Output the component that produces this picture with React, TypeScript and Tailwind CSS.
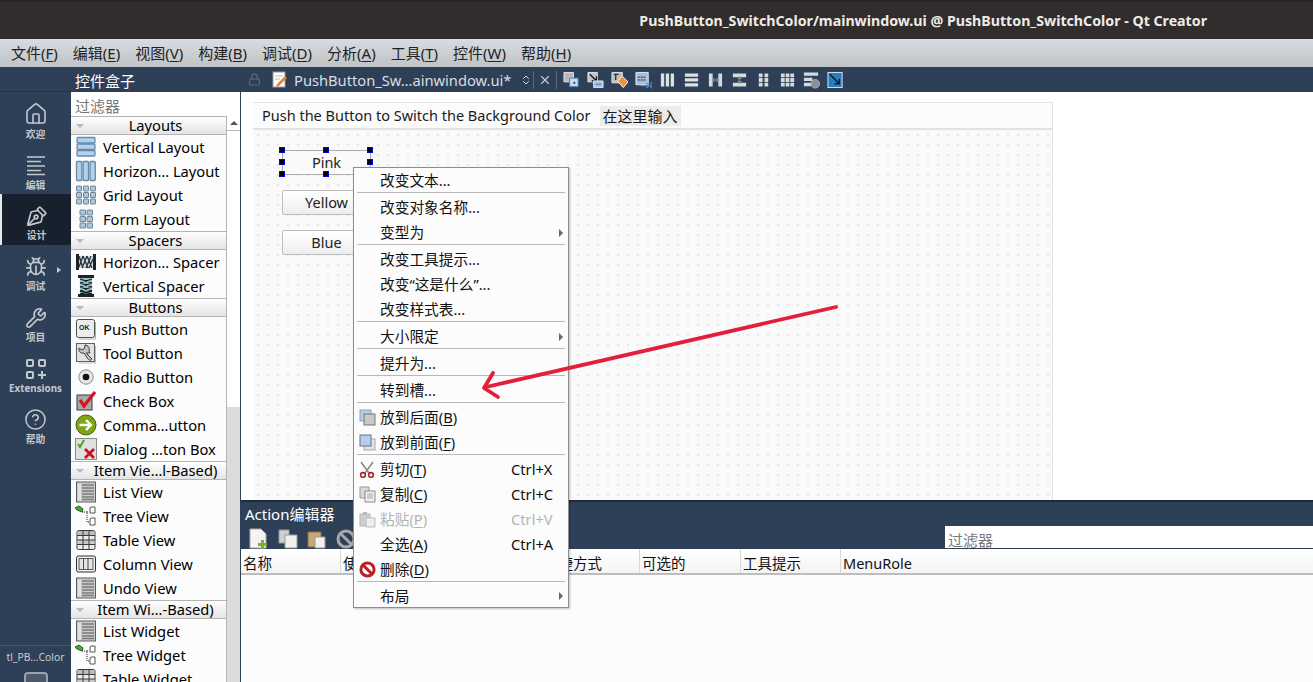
import type { ReactNode } from "react";
import { Home, PenTool, Bug, Wrench, HelpCircle, Lock, X, ChevronsUpDown } from "lucide-react";

const UI_FONT = "font-['Noto_Sans','Noto_Sans_CJK_SC',sans-serif]";

function Gl({ children }: { children: ReactNode }) {
  return (
    <svg width="22" height="22" viewBox="0 0 22 22" className="shrink-0">
      {children}
    </svg>
  );
}

const ListGlyph = () => (
  <Gl>
    <rect x="1.5" y="1" width="19" height="20" fill="#c9c9c9" stroke="#5e5e5e" />
    <rect x="3" y="2.5" width="3" height="17" fill="#e2e2e2" />
    <path d="M7 4h12M7 7h12M7 10h12M7 13h12M7 16h12M7 18.5h12" stroke="#7c7c7c" strokeWidth="1.4" />
  </Gl>
);

const ICONS: Record<string, ReactNode> = {
  vertical: (
    <Gl>
      {[1.5, 8, 14.5].map((y) => (
        <rect key={y} x="2" y={y} width="18" height="5.5" rx="1" fill="#a9d4f5" stroke="#73879b" strokeWidth="1.3" />
      ))}
    </Gl>
  ),
  horizontal: (
    <Gl>
      {[1.5, 8.2, 15].map((x) => (
        <rect key={x} x={x} y="1.5" width="5.3" height="19" rx="1" fill="#a9d4f5" stroke="#73879b" strokeWidth="1.3" />
      ))}
    </Gl>
  ),
  grid: (
    <Gl>
      {[1.5, 8.5, 15.5].flatMap((x) =>
        [2, 8.5, 15].map((y) => <rect key={x + "-" + y} x={x} y={y} width="5" height="5" rx="0.5" fill="#a9c6e2" stroke="#75838f" />),
      )}
    </Gl>
  ),
  form: (
    <Gl>
      {[5, 12].flatMap((x) =>
        [2, 8.5, 15].map((y) => <rect key={x + "-" + y} x={x} y={y} width="5.5" height="5" rx="0.5" fill="#a9c6e2" stroke="#75838f" />),
      )}
    </Gl>
  ),
  hspacer: (
    <Gl>
      <rect x="1" y="3" width="3" height="16" fill="#222" />
      <rect x="18" y="3" width="3" height="16" fill="#222" />
      <rect x="4" y="5" width="14" height="12" fill="#d3dce0" />
      <path d="M4 16l4-11M7 17l5-12M11 17l5-12M14 17l4-9M4 5l4 12M8 5l5 12M12 5l5 12" stroke="#26343d" strokeWidth="1.3" fill="none" />
    </Gl>
  ),
  vspacer: (
    <Gl>
      <rect x="3" y="0" width="16" height="3" fill="#222" />
      <rect x="3" y="19" width="16" height="3" fill="#222" />
      <rect x="5" y="3" width="12" height="16" fill="#9fbcc6" />
      <path d="M5 4l12 4M5 8l12 4M5 12l12 4M5 16l12 3M17 4L5 8M17 8L5 12M17 12L5 16M17 16L5 19" stroke="#0f1f28" strokeWidth="1.3" fill="none" />
    </Gl>
  ),
  push: (
    <Gl>
      <rect x="1.5" y="1.5" width="18" height="18" rx="2" fill="#ececec" stroke="#4f4f4f" />
      <path d="M20.5 4v17H4" stroke="#b0b0b0" fill="none" />
      <text x="4" y="12" fontSize="7" fontWeight="700" fill="#222" fontFamily="Liberation Sans, sans-serif">OK</text>
    </Gl>
  ),
  tool: (
    <Gl>
      <rect x="1.5" y="1.5" width="18" height="18" fill="#e2e2e2" stroke="#5e5e5e" />
      <path d="M20.5 4v17H4" stroke="#bdbdbd" fill="none" />
      <path d="M17 17c-1 2-3 1-4 0L9 11C6 12 3 9 4 6l3 2 2-1 1-3 0-1c3 0 5 3 4 6l1 2-4 0 5 5z" fill="#c4c4c4" stroke="#3e3e3e" />
    </Gl>
  ),
  radio: (
    <Gl>
      <circle cx="11" cy="11" r="7.2" fill="#e6e6e6" stroke="#8c8c8c" />
      <circle cx="11" cy="11" r="3.3" fill="#111" />
    </Gl>
  ),
  check: (
    <Gl>
      <rect x="2" y="5" width="15" height="15" fill="#a9a9a9" stroke="#3a3a3a" />
      <path d="M5 10l4 6L20 2" stroke="#d8121f" strokeWidth="3.2" fill="none" />
    </Gl>
  ),
  command: (
    <Gl>
      <circle cx="11" cy="11" r="10" fill="#7da515" stroke="#46600c" />
      <path d="M4.5 11h11M11 6l5 5-5 5" stroke="#fff" strokeWidth="2.4" fill="none" />
    </Gl>
  ),
  dialog: (
    <Gl>
      <rect x="0.5" y="0.5" width="21" height="21" fill="#e0e0e0" stroke="#8a8a8a" />
      <path d="M3 6l2 3 4-7" stroke="#4aa52a" strokeWidth="2" fill="none" />
      <path d="M10 11l9 9M19 11l-9 9" stroke="#c8101a" strokeWidth="2.8" />
    </Gl>
  ),
  list: <ListGlyph />,
  tree: (
    <Gl>
      <path d="M0 3l4-2 4 3-1 3-5-2z" fill="#4ca82e" stroke="#22601a" />
      <path d="M7 7h5v10h2M12 7h2" stroke="#222" strokeDasharray="1 1" fill="none" />
      <path d="M16 2h4v6h-5V3zM16 13h4v7h-5v-6z" fill="#fff" stroke="#555" />
    </Gl>
  ),
  table: (
    <Gl>
      <rect x="2" y="1.5" width="18" height="19" rx="1.5" fill="#ececec" stroke="#3a3a3a" />
      <rect x="2.5" y="2" width="17" height="4" fill="#bdbdbd" />
      <rect x="2.5" y="11" width="17" height="4.5" fill="#c9c9c9" />
      <path d="M2 6.5h18M2 11h18M2 15.5h18M8 1.5v19M14 1.5v19" stroke="#3a3a3a" />
    </Gl>
  ),
  column: (
    <Gl>
      <rect x="1.5" y="3" width="19" height="16" rx="2" fill="#f2f2f2" stroke="#2e2e2e" />
      <rect x="4" y="5.5" width="14" height="11" fill="#e4e4e4" stroke="#5a5a5a" />
      <path d="M8.5 5.5v11M13 5.5v11" stroke="#4a4a4a" />
    </Gl>
  ),
};

type ToolItem = { label: string; icon: string };
type Section = { title: string; items: ToolItem[] };

const SECTIONS: Section[] = [
  {
    title: "Layouts",
    items: [
      { label: "Vertical Layout", icon: "vertical" },
      { label: "Horizon… Layout", icon: "horizontal" },
      { label: "Grid Layout", icon: "grid" },
      { label: "Form Layout", icon: "form" },
    ],
  },
  {
    title: "Spacers",
    items: [
      { label: "Horizon… Spacer", icon: "hspacer" },
      { label: "Vertical Spacer", icon: "vspacer" },
    ],
  },
  {
    title: "Buttons",
    items: [
      { label: "Push Button", icon: "push" },
      { label: "Tool Button", icon: "tool" },
      { label: "Radio Button", icon: "radio" },
      { label: "Check Box", icon: "check" },
      { label: "Comma…utton", icon: "command" },
      { label: "Dialog …ton Box", icon: "dialog" },
    ],
  },
  {
    title: "Item Vie…l-Based)",
    items: [
      { label: "List View", icon: "list" },
      { label: "Tree View", icon: "tree" },
      { label: "Table View", icon: "table" },
      { label: "Column View", icon: "column" },
      { label: "Undo View", icon: "list" },
    ],
  },
  {
    title: "Item Wi…-Based)",
    items: [
      { label: "List Widget", icon: "list" },
      { label: "Tree Widget", icon: "tree" },
      { label: "Table Widget", icon: "table" },
    ],
  },
];

const MENUS = ["文件(F)", "编辑(E)", "视图(V)", "构建(B)", "调试(D)", "分析(A)", "工具(T)", "控件(W)", "帮助(H)"];

// "文件(F)" -> the letter in the brackets gets its mnemonic underline
function Mnemonic({ text }: { text: string }) {
  const m = text.match(/^(.*\()(.)(\))$/);
  if (!m) return <>{text}</>;
  return (
    <>
      {m[1]}
      <span className="underline underline-offset-2">{m[2]}</span>
      {m[3]}
    </>
  );
}

function Extensions() {
  return (
    <svg width="22" height="22" viewBox="0 0 22 22" fill="none" stroke="#c2c8ce" strokeWidth="2">
      <rect x="2" y="2" width="6" height="6" rx="1" />
      <rect x="14" y="2" width="6" height="6" rx="1" />
      <rect x="2" y="14" width="6" height="6" rx="1" />
      <path d="M17 13v8M13 17h8" />
    </svg>
  );
}

function EditLines() {
  return (
    <svg width="22" height="24" viewBox="0 0 22 24" fill="none" stroke="#c2c8ce" strokeWidth="1.6">
      <path d="M2 4h18M2 8.5h14M2 13h18M2 17.500h14M2 21.500h18" />
    </svg>
  );
}

const MODES = [
  { label: "欢迎", icon: <Home size={24} strokeWidth={1.6} /> },
  { label: "编辑", icon: <EditLines /> },
  { label: "设计", icon: <PenTool size={22} strokeWidth={1.8} className="-scale-y-100" />, active: true },
  { label: "调试", icon: <Bug size={22} strokeWidth={1.8} />, arrow: true },
  { label: "项目", icon: <Wrench size={22} strokeWidth={1.8} /> },
  { label: "Extensions", icon: <Extensions /> },
  { label: "帮助", icon: <HelpCircle size={23} strokeWidth={1.6} /> },
];

function ModeBar() {
  return (
    <aside className="flex w-[71px] shrink-0 flex-col bg-[#2e4057]">
      <div className="h-[25px] shrink-0 border-b border-[#25344a]" />
      {MODES.map((m) => (
        <div
          key={m.label}
          className={`relative flex h-[51px] shrink-0 flex-col items-center justify-center gap-[3px] pt-[7px] text-[#c2c8ce] ${
            m.active ? "border-l-2 border-[#e8e8e8] bg-[#17202d]" : ""
          }`}
        >
          {m.icon}
          <span className="text-[9.8px] leading-3 font-bold">{m.label}</span>
          {m.arrow && <span className="absolute top-[22px] right-[10px] border-y-[3px] border-l-4 border-y-transparent border-l-[#c2c8ce]" />}
        </div>
      ))}
      <div className="mt-auto flex flex-col items-center">
        <div className="w-full border-t border-[#47576b] pt-[4px] text-center text-[10.3px] leading-[14px] text-[#c9ced4]">tl_PB…Color</div>
        <div className="mt-[8px] h-[10px] w-6 rounded-t-sm border-2 border-b-0 border-[#9aa3ad] bg-[#4b5a6b]" />
      </div>
    </aside>
  );
}

function Toolbox() {
  return (
    <section className="flex w-[170px] shrink-0 flex-col overflow-hidden border-r border-[#2e4057]">
      <div className="flex h-[25px] shrink-0 items-center bg-[#2e4057] px-1 pt-[4px] text-[15px] text-white">控件盒子</div>
      <div className="flex h-[24px] shrink-0 items-center bg-white px-1 pt-[4px] text-[15px] text-[#777]">过滤器</div>
      <div className="flex min-h-0 flex-1">
        <div className="w-[155px] shrink-0 bg-[#fcfcfc]">
          {SECTIONS.map((s) => (
            <div key={s.title}>
              <div className="relative flex h-[19px] items-center justify-center whitespace-nowrap border-y border-[#b4b4b4] bg-gradient-to-b from-white to-[#e4e4e4] pl-[14px] text-[14.7px] leading-none text-black">
                <span className="absolute top-[7px] left-[5px] border-x-[4px] border-t-[4px] border-x-transparent border-t-[#b9b9b9]" />
                {s.title}
              </div>
              {s.items.map((i) => (
                <div key={i.label} className="flex h-[24px] items-center whitespace-nowrap pl-[4px] text-[14.7px] text-black">
                  <span className="flex w-[28px] shrink-0 items-center">{ICONS[i.icon]}</span>
                  <span className="pt-[1px]">{i.label}</span>
                </div>
              ))}
            </div>
          ))}
        </div>
        <div className="flex w-[14px] flex-col border-l border-[#b4b4b4]">
          <div className="flex h-[15px] items-center justify-center border-b border-[#b4b4b4] bg-white">
            <span className="border-x-[4px] border-b-[4px] border-x-transparent border-b-[#555]" />
          </div>
          <div className="h-[276px] bg-white" />
          <div className="flex-1 bg-[#dcdcdc]" />
        </div>
      </div>
    </section>
  );
}

// the little toolbar glyphs of the form editor
const TOOLBAR: ReactNode[] = [
  <g key="a">
    <path d="M1 1h10v10H1z" fill="#b9b9b9" stroke="#e6e6e6" />
    <path d="M7 7h9v9H7z" fill="#c7dcf3" stroke="#4f7fb5" />
    <rect x="11" y="11" width="2" height="2" fill="#1d3b60" />
  </g>,
  <g key="b">
    <path d="M1 1h10v10H1z" fill="#c5c5c5" stroke="#e6e6e6" />
    <path d="M3 3l7 7M10 5v5H5" stroke="#101820" strokeWidth="1.5" fill="none" />
    <path d="M7 10h10v7H7z" fill="#a9c6e6" stroke="#dce8f3" />
    <path d="M9 13.500h6" stroke="#466f9c" />
  </g>,
  <g key="c">
    <path d="M1 1h11v11H1z" fill="#bdbdbd" stroke="#e6e6e6" />
    <path d="M3 3h5M5 3v6" stroke="#2a2a2a" strokeWidth="1.3" />
    <path d="M7 10l5-5 6 6-5 6z" fill="#f28f3b" stroke="#fff" />
  </g>,
  <g key="d">
    <path d="M1 1h13v13H1z" fill="#a9bdd6" stroke="#dfe9f3" />
    <path d="M3 6h9M3 9h9" stroke="#2f5c92" strokeWidth="1.6" strokeDasharray="2 1" />
    <path d="M6 15h9M12 12.500l3 2.500-3 2.500M17 11v7" stroke="#4d8fd0" strokeWidth="1.3" fill="none" />
  </g>,
  <path key="e" d="M2 2h3.500v14H2zM7.200 2h3.500v14H7.200zM12.400 2h3.500v14h-3.500z" fill="#dde1e4" />,
  <path key="f" d="M2 2h14v3.500H2zM2 7.200h14v3.500H2zM2 12.400h14v3.500H2z" fill="#dde1e4" />,
  <g key="g">
    <path d="M2 2h4v14H2zM12 2h4v14h-4z" fill="#d5d9dc" />
    <path d="M6 9h6M7.500 7L6 9l1.500 2M10.500 7L12 9l-1.500 2" stroke="#7d8690" strokeWidth="1.5" fill="none" />
  </g>,
  <g key="h">
    <path d="M2 2h14v4H2zM2 12h14v4H2z" fill="#d5d9dc" />
    <path d="M9 6v6M7 7.500L9 6l2 1.500M7 10.500L9 12l2-1.500" stroke="#7d8690" strokeWidth="1.5" fill="none" />
  </g>,
  <path key="i" d="M4 2h4v4H4zM10 2h4v4h-4zM4 7h4v4H4zM10 7h4v4h-4zM4 12h4v4H4zM10 12h4v4h-4z" fill="#d5d9dc" />,
  <path key="j" d="M2 2h4v4H2zM7 2h4v4H7zM12 2h4v4h-4zM2 7h4v4H2zM7 7h4v4H7zM12 7h4v4h-4zM2 12h4v4H2zM7 12h4v4H7zM12 12h4v4h-4z" fill="#d5d9dc" />,
  <g key="k">
    <path d="M1 1h15v3.500H1zM1 6.500h9V10H1zM1 12h8v3.500H1z" fill="#d5d9dc" />
    <circle cx="13" cy="13" r="4.500" fill="#8b9096" stroke="#aeb3b8" />
  </g>,
  <g key="l">
    <rect x="1" y="1" width="15" height="16" fill="#2a7cbd" stroke="#dbe6ef" />
    <path d="M3 3l10 10M13 8v5H8" stroke="#0c1c2c" strokeWidth="1.6" fill="none" />
  </g>,
];

function TabBar() {
  return (
    <div className="flex h-[25px] shrink-0 items-center bg-[#2e4057] pl-[7px] text-[#d8dde2]">
      <Lock size={13} className="mr-[11px] text-[#5c6b7c]" />
      <svg width="16" height="17" viewBox="0 0 16 17" className="mr-[6px] shrink-0">
        <rect x="1" y="1" width="12" height="15" fill="#fff" stroke="#999" />
        <path d="M3 5h8M3 8h5" stroke="#bbb" />
        <path d="M5 13l8-8 2 2-8 8-3 1z" fill="#e08a2e" />
      </svg>
      <span className="w-[226px] whitespace-nowrap pt-[2px] text-[14.7px]">PushButton_Sw…ainwindow.ui*</span>
      <ChevronsUpDown size={12} className="mr-[1px] text-[#d8dde2]" />
      <div className="h-[18px] border-l border-[#5c6b7c]" />
      <X size={14} className="ml-[4px] mr-[4px] text-[#c6ccd2]" />
      <div className="mr-[6px] h-[18px] border-l border-[#5c6b7c]" />
      <div className="flex gap-[7px]">
        {TOOLBAR.map((g, i) => (
          <svg key={i} width="17" height="18" viewBox="0 0 18 18">
            {g}
          </svg>
        ))}
      </div>
    </div>
  );
}

function Handle({ className }: { className: string }) {
  return <span className={`absolute size-[6px] border border-[#0000e0] bg-black ${className}`} />;
}

function FakeButton({ label, selected }: { label: string; selected?: boolean }) {
  return (
    <div
      className={`relative flex h-[25px] w-[89px] items-center justify-center text-[14.5px] text-[#222] ${
        selected ? "border border-[#aaa] bg-[#fafafa]" : "rounded-[2px] border border-[#bcbcbc] bg-gradient-to-b from-white to-[#eeeeee]"
      }`}
    >
      {label}
      {selected && (
        <>
          <Handle className="-top-[4px] -left-[4px]" />
          <Handle className="-top-[4px] left-[40px]" />
          <Handle className="-top-[4px] -right-[3px]" />
          <Handle className="top-[8px] -left-[4px]" />
          <Handle className="top-[8px] -right-[3px]" />
          <Handle className="-bottom-[3px] -left-[4px]" />
          <Handle className="-bottom-[3px] left-[40px]" />
          <Handle className="-bottom-[3px] -right-[3px]" />
        </>
      )}
    </div>
  );
}

function FormCanvas() {
  return (
    <div className="min-h-0 flex-1 overflow-hidden bg-white pl-[12px] pt-[10px]">
      <div className="flex h-full w-[800px] flex-col border-t border-r border-[#e2e2e2] bg-[#fafafa]">
        <div className="flex h-[27px] shrink-0 items-center border-b-2 border-[#e2e2e2] bg-[#fcfcfc] pl-[9px] text-[14.5px] text-[#1a1a1a]">
          <span className="whitespace-nowrap">Push the Button to Switch the Background Color</span>
          <span className="ml-[9px] bg-[#ececec] px-[3px] text-[15px] leading-[20px]">在这里输入</span>
        </div>
        <div className="flex-1 bg-[radial-gradient(#d0d0d0_0.6px,transparent_0.8px)] bg-[length:10px_10px] pl-[29px] pt-[20px]">
          <div className="flex flex-col gap-[15px]">
            <FakeButton label="Pink" selected />
            <FakeButton label="Yellow" />
            <FakeButton label="Blue" />
          </div>
        </div>
      </div>
    </div>
  );
}

const COLUMNS = [
  { label: "名称", w: "w-[100px] border-r" },
  { label: "使用", w: "w-[201px] border-r" },
  { label: "快捷方式", w: "w-[98px] border-r" },
  { label: "可选的", w: "w-[101px] border-r" },
  { label: "工具提示", w: "w-[100px] border-r" },
  { label: "MenuRole", w: "flex-1" },
];

function ActionEditor() {
  return (
    <div className="flex h-[182px] shrink-0 flex-col">
      <div className="h-[49px] shrink-0 border-t-2 border-[#1d2a3a] bg-[#2e4057]">
        <div className="flex h-[24px] items-center pl-[4px] text-[15px] text-white">Action编辑器</div>
        <div className="flex h-[23px] items-start">
          <div className="mt-[2px] flex items-center gap-[9px] pl-[8px]">
            <svg width="20" height="21" viewBox="0 0 20 21">
              <path d="M1 1h11l5 5v14H1z" fill="#f4f4f4" stroke="#aaa" />
              <path d="M12 12h3v3h3v3h-3v3h-3v-3H9v-3h3z" fill="#7fae2e" />
            </svg>
            <svg width="20" height="20" viewBox="0 0 20 20">
              <path d="M1 1h10v13H1z" fill="#cfcfcf" stroke="#999" />
              <path d="M7 6h12v13H7z" fill="#f0f0f0" stroke="#999" />
            </svg>
            <svg width="20" height="20" viewBox="0 0 20 20">
              <path d="M1 3h13v15H1z" fill="#c9a679" stroke="#8a6b45" />
              <path d="M8 8h10v11H8z" fill="#f0f0f0" stroke="#999" />
            </svg>
            <svg width="20" height="20" viewBox="0 0 20 20">
              <circle cx="10" cy="10" r="8" fill="none" stroke="#a8a8a8" strokeWidth="3" />
              <path d="M4 4l12 12" stroke="#a8a8a8" strokeWidth="3" />
            </svg>
          </div>
          <div className="ml-auto flex h-[22px] w-[368px] items-end bg-white pl-[3px] text-[15px] leading-[16px] text-[#777]">过滤器</div>
        </div>
      </div>
      <div className="flex h-[26px] shrink-0 border-b-2 border-[#bdbdbd] bg-gradient-to-b from-white to-[#f4f4f4] text-[14.5px] text-[#111]">
        {COLUMNS.map((c) => (
          <div key={c.label} className={`${c.w} flex items-center whitespace-nowrap border-[#d8d8d8] pl-[2px] pt-[5px]`}>
            {c.label}
          </div>
        ))}
      </div>
      <div className="flex-1 bg-[#fcfcfc]" />
    </div>
  );
}

type MenuEntry =
  | { sep: true }
  | { label: string; shortcut?: string; sub?: boolean; disabled?: boolean; icon?: ReactNode; last?: boolean };

const MENU_ITEMS: MenuEntry[] = [
  { label: "改变文本..." },
  { sep: true },
  { label: "改变对象名称..." },
  { label: "变型为", sub: true },
  { sep: true },
  { label: "改变工具提示..." },
  { label: "改变“这是什么”..." },
  { label: "改变样式表..." },
  { sep: true },
  { label: "大小限定", sub: true },
  { sep: true },
  { label: "提升为..." },
  { sep: true },
  { label: "转到槽..." },
  { sep: true },
  {
    label: "放到后面(B)",
    icon: (
      <svg width="17" height="17" viewBox="0 0 17 17">
        <rect x="1" y="1" width="11" height="11" fill="#b7cde8" stroke="#8aa0bb" />
        <rect x="5" y="5" width="11" height="11" fill="#c8c8c8" stroke="#777" />
      </svg>
    ),
  },
  {
    label: "放到前面(F)",
    icon: (
      <svg width="17" height="17" viewBox="0 0 17 17">
        <rect x="5" y="5" width="11" height="11" fill="#e4e4e4" stroke="#aaa" />
        <rect x="1" y="1" width="11" height="11" fill="#b7cde8" stroke="#5f7594" />
      </svg>
    ),
  },
  { sep: true },
  {
    label: "剪切(T)",
    shortcut: "Ctrl+X",
    icon: (
      <svg width="16" height="17" viewBox="0 0 16 17" fill="none">
        <path d="M2 1l8 11M14 1L6 12" stroke="#8a8a8a" strokeWidth="1.6" />
        <circle cx="4" cy="14" r="2.4" stroke="#a82a2a" strokeWidth="1.6" />
        <circle cx="12" cy="14" r="2.4" stroke="#a82a2a" strokeWidth="1.6" />
      </svg>
    ),
  },
  {
    label: "复制(C)",
    shortcut: "Ctrl+C",
    icon: (
      <svg width="17" height="17" viewBox="0 0 17 17">
        <path d="M1 1h9v11H1z" fill="#d8d8d8" stroke="#999" />
        <path d="M6 5h10v11H6z" fill="#f0f0f0" stroke="#888" />
        <path d="M8 8h6M8 10h6M8 12h6" stroke="#aaa" />
      </svg>
    ),
  },
  {
    label: "粘贴(P)",
    shortcut: "Ctrl+V",
    disabled: true,
    icon: (
      <svg width="17" height="17" viewBox="0 0 17 17">
        <path d="M1 3h10v12H1z" fill="#cfcfcf" stroke="#b5b5b5" />
        <path d="M4 1h4v3H4z" fill="#bbb" />
        <path d="M7 7h9v9H7z" fill="#eee" stroke="#bbb" />
      </svg>
    ),
  },
  { label: "全选(A)", shortcut: "Ctrl+A" },
  {
    label: "删除(D)",
    icon: (
      <svg width="17" height="17" viewBox="0 0 17 17" fill="none">
        <circle cx="8.5" cy="8.5" r="6.6" fill="#fff" stroke="#b9202a" strokeWidth="3" />
        <path d="M4 4l9 9" stroke="#b9202a" strokeWidth="3" />
      </svg>
    ),
  },
  { sep: true },
  { label: "布局", sub: true, last: true },
];

function ContextMenu() {
  return (
    <div className="absolute top-[167px] left-[353px] z-20 flex w-[216px] flex-col border border-[#8e8e8e] bg-[#fcfcfc] shadow-[1px_1px_2px_rgba(0,0,0,0.25)]">
      {MENU_ITEMS.map((item, i) =>
        "sep" in item ? (
          <div key={i} className="relative z-10 mx-[3px] -mt-[1px] mb-[1px] h-[2px] border-t border-[#b8b8b8]" />
        ) : (
          <div
            key={item.label}
            className={`relative flex items-center pl-[26px] pr-[4px] text-[14.7px] ${item.last ? "h-[23px] pt-[1px]" : "h-[25px]"} ${item.disabled ? "text-[#b4b4b4]" : "text-[#111]"}`}
          >
            {item.icon && <span className="absolute top-[4px] left-[5px] flex">{item.icon}</span>}
            <span className="whitespace-nowrap">
              <Mnemonic text={item.label} />
            </span>
            {item.shortcut && <span className="absolute left-[157px]">{item.shortcut}</span>}
            {item.sub && <span className="absolute right-[5px] border-y-[4px] border-l-[4px] border-y-transparent border-l-[#666]" />}
          </div>
        ),
      )}
    </div>
  );
}

export default function App() {
  return (
    <div className={`relative flex h-[682px] w-[1313px] flex-col overflow-hidden bg-white ${UI_FONT}`}>
      <header className="flex h-[39px] shrink-0 items-center justify-end border-t-2 border-[#232323] bg-[#302d2c] pr-[106px]">
        <span className="whitespace-nowrap text-[14.2px] font-bold text-[#efebe7]">PushButton_SwitchColor/mainwindow.ui @ PushButton_SwitchColor - Qt Creator</span>
      </header>
      <nav className="flex h-[28px] shrink-0 items-center gap-[15px] bg-gradient-to-b from-[#d8dce2] to-[#bfc3c5] pl-[11px] text-[15px] text-[#222]">
        {MENUS.map((m) => (
          <span key={m}>
            <Mnemonic text={m} />
          </span>
        ))}
      </nav>
      <div className="flex min-h-0 flex-1">
        <ModeBar />
        <Toolbox />
        <main className="flex min-w-0 flex-1 flex-col">
          <TabBar />
          <FormCanvas />
          <ActionEditor />
        </main>
      </div>
      <ContextMenu />
      <svg className="absolute top-[300px] left-[478px] z-30" width="364" height="100" viewBox="0 0 364 100" fill="none">
        <path d="M358 7L8 87" stroke="#e3203c" strokeWidth="3.8" strokeLinecap="round" />
        <path d="M15 73L6 88l14 9" stroke="#e3203c" strokeWidth="3.8" strokeLinecap="round" strokeLinejoin="round" />
      </svg>
    </div>
  );
}
